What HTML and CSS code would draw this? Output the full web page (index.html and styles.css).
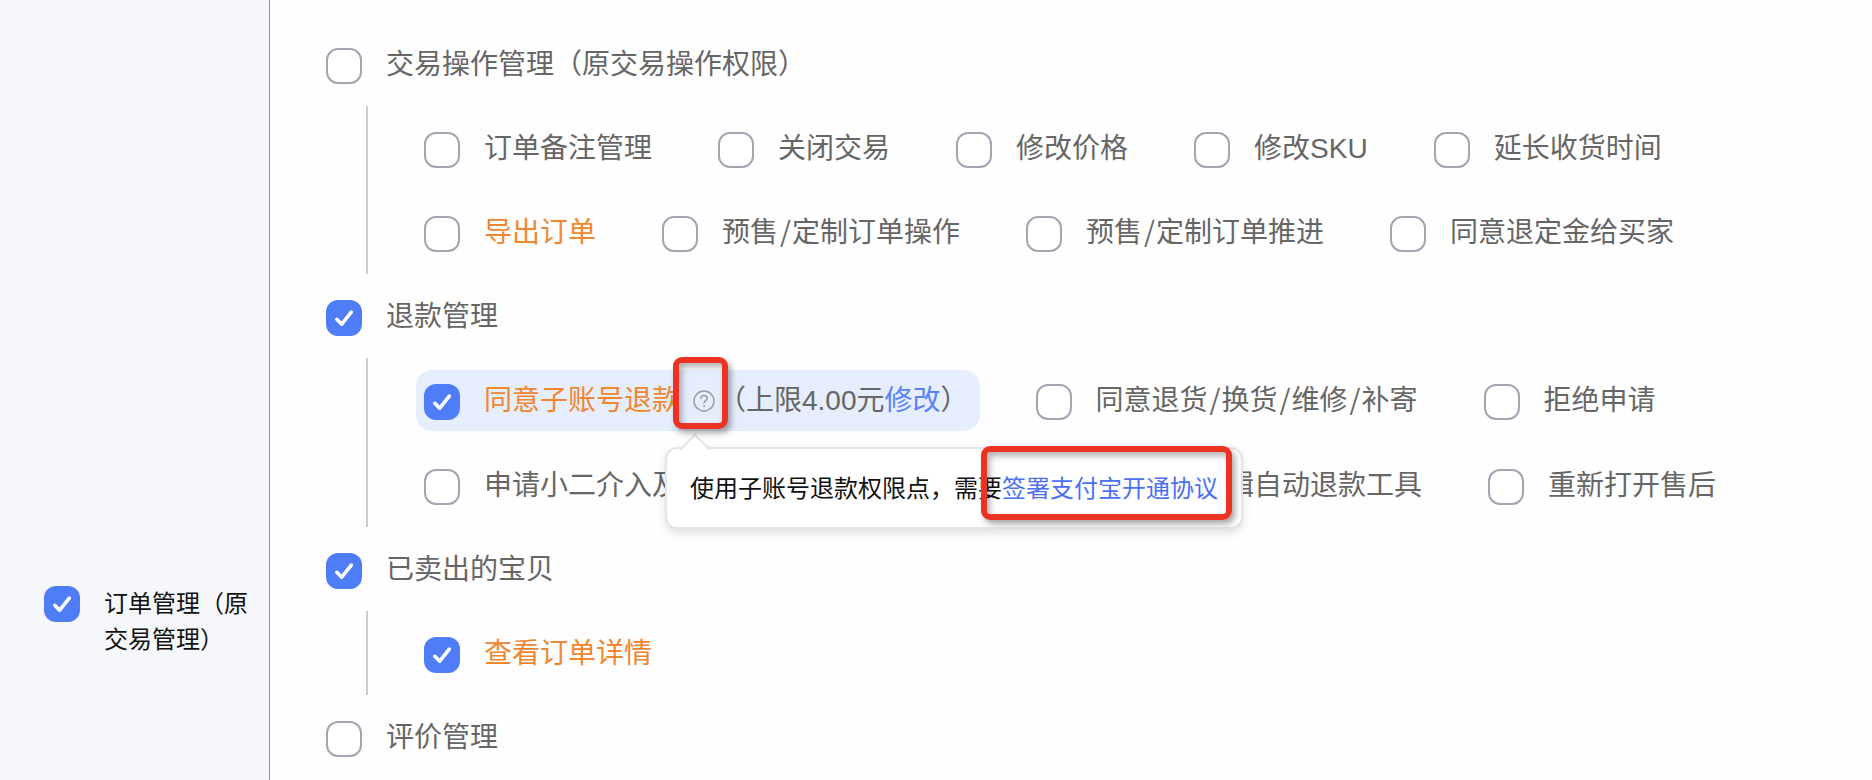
FILE: index.html
```html
<!DOCTYPE html>
<html lang="zh-CN">
<head>
<meta charset="utf-8">
<title>权限管理</title>
<link rel="stylesheet" href="styles.css">
</head>
<body>
<div class="page">
  <aside class="sidebar">
    <div class="module">
      <input class="check" type="checkbox" id="order" checked>
      <label class="module-name" for="order">订单管理（原交易管理）</label>
    </div>
  </aside>
  <main class="main">
    <section>
      <div class="item">
        <input class="check" type="checkbox" id="trade"><label class="name" for="trade">交易操作管理（原交易操作权限）</label>
      </div>
      <ul class="children">
        <li class="item"><input class="check" type="checkbox" id="t1"><label class="name" for="t1">订单备注管理</label></li>
        <li class="item"><input class="check" type="checkbox" id="t2"><label class="name" for="t2">关闭交易</label></li>
        <li class="item"><input class="check" type="checkbox" id="t3"><label class="name" for="t3">修改价格</label></li>
        <li class="item"><input class="check" type="checkbox" id="t4"><label class="name" for="t4">修改SKU</label></li>
        <li class="item"><input class="check" type="checkbox" id="t5"><label class="name" for="t5">延长收货时间</label></li>
        <li class="item"><input class="check" type="checkbox" id="t6"><label class="name name-key" for="t6">导出订单</label></li>
        <li class="item"><input class="check" type="checkbox" id="t7"><label class="name" for="t7">预售<span class="slash">/</span>定制订单操作</label></li>
        <li class="item"><input class="check" type="checkbox" id="t8"><label class="name" for="t8">预售<span class="slash">/</span>定制订单推进</label></li>
        <li class="item"><input class="check" type="checkbox" id="t9"><label class="name" for="t9">同意退定金给买家</label></li>
      </ul>
    </section>
    <section>
      <div class="item">
        <input class="check" type="checkbox" id="refund" checked><label class="name" for="refund">退款管理</label>
      </div>
      <ul class="children">
        <li class="item item-active">
          <input class="check" type="checkbox" id="r1" checked><label class="name name-key" for="r1">同意子账号退款</label>
          <div class="help">
            <button class="help-button" type="button" aria-label="说明">
              <svg class="help-icon" viewBox="0 0 22 22" fill="none" stroke="#999" stroke-linecap="round">
                <circle cx="11" cy="11" r="10" stroke-width="1.4"/>
                <path d="M7.8 8.6C7.8 6.7 9.2 5.6 11 5.6s3.2 1.1 3.2 2.8c0 2.2-3.2 2.2-3.2 4.7" stroke-width="1.5"/>
                <circle cx="11" cy="16.2" r=".5" fill="#999"/>
              </svg>
            </button>
            <div class="popover" role="tooltip">
              <span>使用子账号退款权限点，需要</span><span class="marked"><a class="link" href="#">签署支付宝开通协议</a><i class="mark mark-link"></i></span>
            </div>
            <i class="mark mark-help"></i>
          </div>
          <span class="limit">（上限4.00元<a class="link-soft" href="#">修改</a>）</span>
        </li>
        <li class="item"><input class="check" type="checkbox" id="r2"><label class="name" for="r2">同意退货<span class="slash">/</span>换货<span class="slash">/</span>维修<span class="slash">/</span>补寄</label></li>
        <li class="item"><input class="check" type="checkbox" id="r3"><label class="name" for="r3">拒绝申请</label></li>
        <li class="item item-wide"><input class="check" type="checkbox" id="r4"><label class="name" for="r4">申请小二介入及</label></li>
        <li class="item"><input class="check" type="checkbox" id="r5"><label class="name" for="r5">编辑自动退款工具</label></li>
        <li class="item"><input class="check" type="checkbox" id="r6"><label class="name" for="r6">重新打开售后</label></li>
      </ul>
    </section>
    <section>
      <div class="item">
        <input class="check" type="checkbox" id="sold" checked><label class="name" for="sold">已卖出的宝贝</label>
      </div>
      <ul class="children">
        <li class="item"><input class="check" type="checkbox" id="s1" checked><label class="name name-key" for="s1">查看订单详情</label></li>
      </ul>
    </section>
    <section>
      <div class="item">
        <input class="check" type="checkbox" id="rate"><label class="name" for="rate">评价管理</label>
      </div>
    </section>
  </main>
</div>
</body>
</html>
```
FILE: styles.css
```css
* {
  box-sizing: border-box;
}

body {
  margin: 0;
  background: #fefefe;
  color: #666;
  font-family: "Liberation Sans", "Noto Sans CJK SC", sans-serif;
  font-size: 28px;
  line-height: 40px;
}

a {
  text-decoration: none;
}

.page {
  display: flex;
  min-height: 100vh;
}

.sidebar {
  flex: none;
  width: 270px;
  padding: 586px 20px 0 44px;
  background: #f5f7fa;
  border-right: 1px solid #95979c;
}

.module {
  display: flex;
  gap: 24px;
}

.module-name {
  color: #111;
  font-size: 24px;
  line-height: 36px;
}

.main {
  flex: 1;
  min-width: 0;
  padding: 22px 0 0 56px;
}

.check {
  appearance: none;
  flex: none;
  width: 36px;
  height: 36px;
  margin: 0;
  border: 2px solid #a3a5b3;
  border-radius: 12px;
  background: #fff;
}

.check:checked {
  border: 0;
  background: #4f7df7 url("data:image/svg+xml,%3Csvg xmlns='http://www.w3.org/2000/svg' viewBox='0 0 36 36'%3E%3Cpath d='M10.8 19.3l4.9 4.9 9.6-12' fill='none' stroke='white' stroke-width='3.6' stroke-linecap='round' stroke-linejoin='round'/%3E%3C/svg%3E");
}

.item {
  display: flex;
  align-items: center;
  height: 84px;
  padding-top: 4px;
  white-space: nowrap;
}

.name,
.limit {
  padding-bottom: 2px;
}

.name {
  margin-left: 24px;
}

.name-key {
  color: #f0862f;
}

.slash {
  margin: 0 1px 0 2px;
  font-family: "Noto Sans CJK SC", sans-serif;
  line-height: 28px;
}

.children {
  display: flex;
  flex-wrap: wrap;
  column-gap: 66px;
  margin: 0 0 0 40px;
  padding: 0 0 0 56px;
  border-left: 2px solid #ccc;
  list-style: none;
}

.item-active {
  height: 61px;
  margin: 12px -10px 12px -8px;
  padding: 2px 11px 0 8px;
  border-radius: 16px;
  background: #e6edfd;
}

.item-wide {
  width: 648px;
}

.help {
  position: relative;
  display: flex;
  padding: 0 3px 2px 13px;
}

.help-button {
  display: flex;
  padding: 0;
  border: 0;
  background: none;
}

.help-icon {
  width: 22px;
  height: 22px;
}

.popover {
  position: absolute;
  z-index: 1;
  top: 57px;
  left: -15px;
  padding: 22px 23px 20px;
  border: 2px solid #e3e5ec;
  border-radius: 12px;
  background: #fff;
  box-shadow: 0 4px 10px rgba(0, 0, 0, 0.12);
  color: #111;
  font-size: 24px;
  line-height: 36px;
}

.popover::before {
  content: "";
  position: absolute;
  top: -11px;
  left: 17px;
  width: 20px;
  height: 20px;
  border: solid #e3e5ec;
  border-width: 2px 0 0 2px;
  background: linear-gradient(135deg, #fff 50%, transparent 50%);
  transform: rotate(45deg);
}

.marked {
  position: relative;
}

.link {
  color: #4a6ff3;
}

.link-soft {
  color: #5b82f8;
}

.mark {
  position: absolute;
  z-index: 2;
  border: 6px solid #eb3323;
  border-radius: 9px;
  box-shadow: 3px 4px 6px rgba(0, 0, 0, 0.35), inset 3px 4px 6px rgba(0, 0, 0, 0.3);
  pointer-events: none;
}

.mark-link {
  inset: -29px -14px -18px -21px;
}

.mark-help {
  top: -33px;
  left: -7px;
  width: 55px;
  height: 72px;
}
```
